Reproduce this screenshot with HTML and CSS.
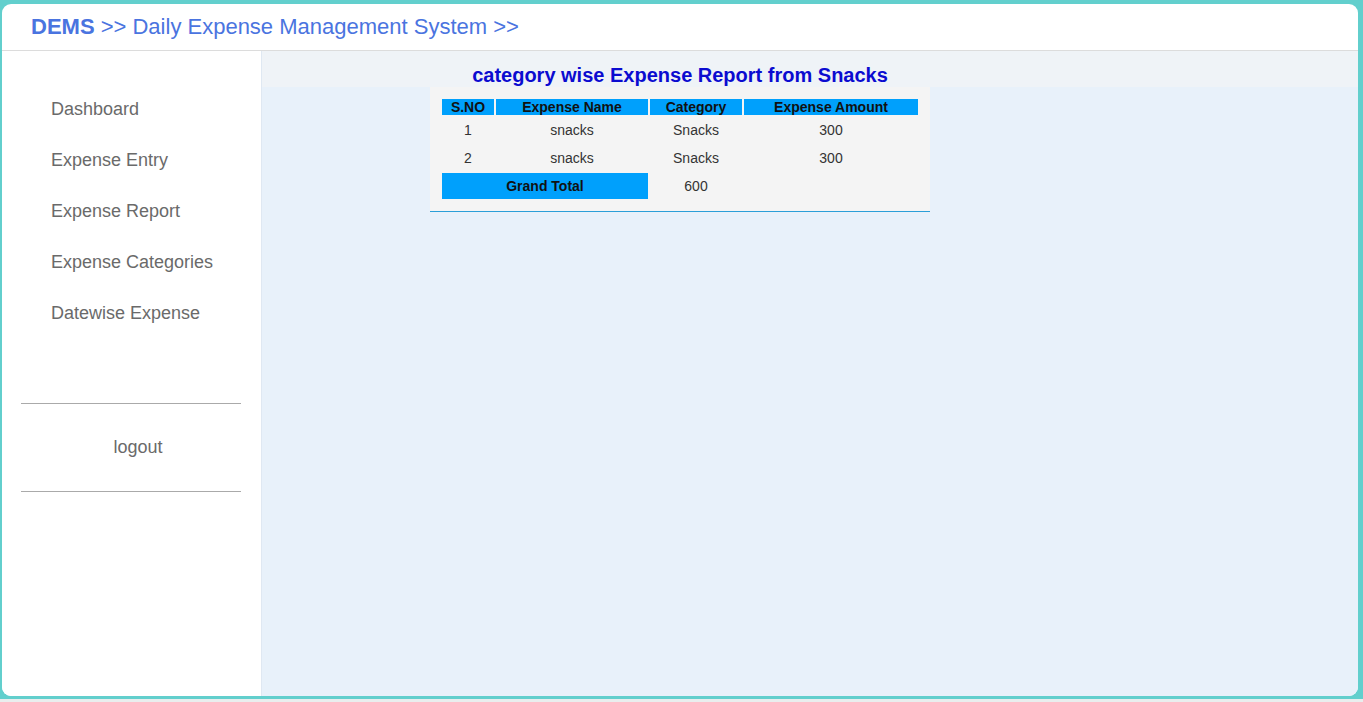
FILE: index.html
```html
<!DOCTYPE html>
<html>
<head>
<meta charset="utf-8">
<title>DEMS</title>
<link rel="stylesheet" href="styles.css">
</head>
<body>
<div class="panel">
  <header class="topbar">
    <span class="brand">DEMS</span> &gt;&gt; Daily Expense Management System &gt;&gt;
  </header>
  <div class="layout">
    <aside class="sidebar">
      <nav class="nav">
        <a class="nav-item">Dashboard</a>
        <a class="nav-item">Expense Entry</a>
        <a class="nav-item">Expense Report</a>
        <a class="nav-item">Expense Categories</a>
        <a class="nav-item">Datewise Expense</a>
      </nav>
      <div class="logout-wrap">
        <a class="logout">logout</a>
      </div>
    </aside>
    <main class="main">
      <div class="band">
        <h2 class="report-title">category wise Expense Report from Snacks</h2>
      </div>
      <div class="report-box">
        <table class="report">
          <thead>
            <tr>
              <th class="c1">S.NO</th>
              <th class="c2">Expense Name</th>
              <th class="c3">Category</th>
              <th class="c4">Expense Amount</th>
            </tr>
          </thead>
          <tbody>
            <tr><td>1</td><td>snacks</td><td>Snacks</td><td>300</td></tr>
            <tr><td>2</td><td>snacks</td><td>Snacks</td><td>300</td></tr>
            <tr><th colspan="2" class="total">Grand Total</th><td>600</td><td></td></tr>
          </tbody>
        </table>
      </div>
    </main>
  </div>
</div>
</body>
</html>
```
FILE: styles.css
```css
html {
  background: #e9eeee;
}
body {
  margin: 0;
  height: 699px;
  box-sizing: border-box;
  padding: 4px 5px 3px 2px;
  background: #62cfcd;
  font-family: "Liberation Sans", Arial, sans-serif;
}
.panel {
  height: 692px;
  background: #ffffff;
  border-radius: 9px;
  overflow: hidden;
  display: flex;
  flex-direction: column;
}
.topbar {
  height: 47px;
  box-sizing: border-box;
  padding: 11px 0 0 29px;
  border-bottom: 1px solid #dcdcdc;
  font-size: 22px;
  line-height: 24px;
  color: #4a74e0;
}
.brand {
  font-weight: bold;
}
.layout {
  flex: 1;
  display: flex;
}
.sidebar {
  width: 259px;
  border-right: 1px solid #dfe8f2;
  background: #fff;
  padding-top: 33px;
  box-sizing: content-box;
}
.nav {
  display: flex;
  flex-direction: column;
}
.nav-item {
  display: block;
  height: 51px;
  line-height: 51px;
  padding-left: 49px;
  font-size: 18px;
  color: #6a6a6a;
}
.logout-wrap {
  margin: 64px 20px 0 19px;
  border-top: 1px solid #aaaaaa;
  border-bottom: 1px solid #aaaaaa;
  height: 87px;
  display: flex;
  align-items: center;
  justify-content: center;
  padding-left: 14px;
}
.logout {
  font-size: 18px;
  color: #6a6a6a;
}
.main {
  flex: 1;
  background: #e8f1fa;
}
.band {
  height: 36px;
  background: #eff3f7;
}
.report-title {
  margin: 0 0 0 168px;
  width: 500px;
  text-align: center;
  font-size: 20px;
  line-height: 22px;
  padding-top: 13px;
  color: #0b0bd0;
}
.report-box {
  margin-left: 168px;
  width: 500px;
  box-sizing: border-box;
  padding: 12px 12px 12px 12px;
  background: #f4f4f4;
  border-bottom: 1px solid #2b9fd8;
}
.report {
  border-spacing: 2px;
  width: calc(100% + 4px);
  margin: -2px;
  font-size: 14px;
  color: #333;
}
.report th {
  background: #00a0fc;
  color: #111;
  font-size: 14px;
  font-weight: bold;
  height: 16px;
  line-height: 16px;
  padding: 0;
  text-align: center;
}
.report td {
  height: 26px;
  padding: 0;
  text-align: center;
}
.report th.total {
  height: 26px;
}
.c1 { width: 52px; }
.c2 { width: 152px; }
.c3 { width: 92px; }
.c4 { width: 174px; }
```
